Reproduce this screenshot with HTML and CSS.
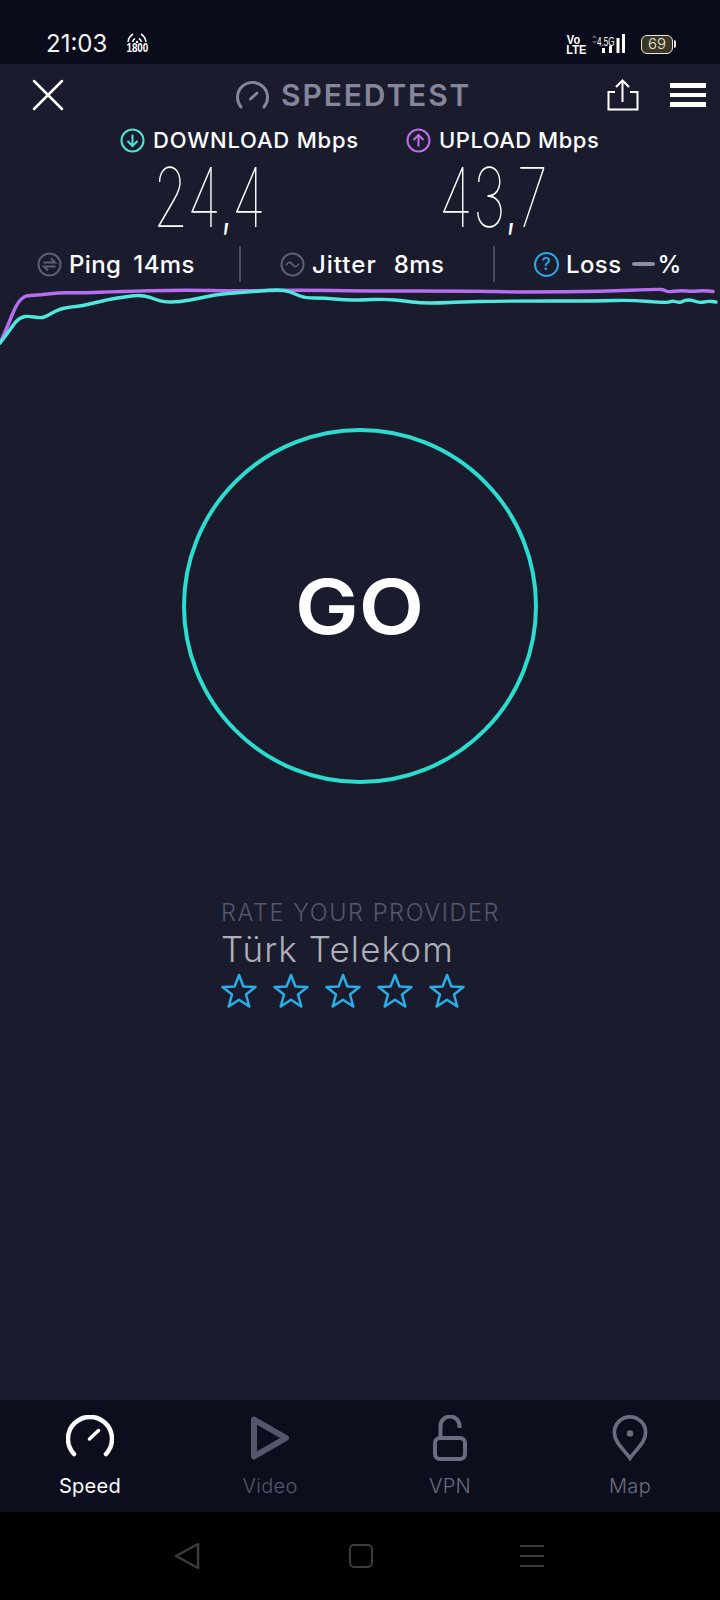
FILE: index.html
```html
<!DOCTYPE html>
<html lang="tr">
<head>
    <meta charset="UTF-8">
    <meta name="viewport" content="width=device-width, initial-scale=1.0">
    <title>Speedtest</title>
    <link rel="stylesheet" href="styles.css">
</head>
<body>
<div class="screen">
    <div class="status-bar">
        <span class="clock">21:03</span>
        <div class="hotspot">
            <svg width="22" height="11" viewBox="0 0 22 11" fill="none" stroke="#fff" stroke-width="1.5">
                <path d="M2 10 A11 11 0 0 1 7 2"/>
                <path d="M20 10 A11 11 0 0 0 15 2"/>
                <path d="M6.5 10 A6 6 0 0 1 9 6.5"/>
                <path d="M15.500 10 A6 6 0 0 0 13 6.500"/>
                <circle cx="11" cy="10" r="1.200" fill="#fff" stroke="none"/>
            </svg>
            <span class="hotspot-band">1800</span>
        </div>
        <div class="status-right">
            <div class="volte"><span>Vo</span><span>LTE</span></div>
            <div class="signal">
                <svg width="36" height="20" viewBox="0 0 36 20" fill="#fff">
                    <path d="M3 4 L5.500 1 L8 4 Z M3 7 L8 7 L5.500 10 Z" fill="#55566a"/>
                    <rect x="13" y="14" width="3" height="5"/>
                    <rect x="20" y="12" width="3" height="7"/>
                    <rect x="27.500" y="4" width="3" height="15"/>
                    <rect x="33" y="0" width="3" height="19"/>
                </svg>
                <span class="network">4.5G</span>
            </div>
            <div class="battery"><span>69</span></div>
        </div>
    </div>

    <div class="app-header">
        <svg class="close-icon" width="32" height="32" viewBox="0 0 32 32" stroke="#fff" stroke-width="2.500" stroke-linecap="round">
            <path d="M2 2 L30 30 M30 2 L2 30"/>
        </svg>
        <div class="brand">
            <svg width="33" height="28" viewBox="0 0 33 28" fill="none" stroke="#85869a" stroke-width="3" stroke-linecap="round">
                <path d="M5 26 A15 15 0 1 1 28 26"/>
                <path d="M14.500 18 L21 12"/>
            </svg>
            <span>SPEEDTEST</span>
        </div>
        <svg class="share-icon" width="32" height="32" viewBox="0 0 32 32" fill="none" stroke="#fff" stroke-width="2">
            <path d="M8 13 H1.500 V30.500 H30.500 V13 H23"/>
            <path d="M15.500 23 V2 M9 8 L15.500 1.500 L22 8"/>
        </svg>
        <div class="menu-icon"><i></i><i></i><i></i></div>
    </div>

    <div class="speeds">
        <div class="speed speed-down">
            <div class="speed-label">
                <svg width="25" height="25" viewBox="0 0 25 25" fill="none" stroke="#4fe3d8" stroke-width="2">
                    <circle cx="12.500" cy="12.500" r="11"/>
                    <path d="M12.500 6.500 V18 M7.500 13 L12.500 18 L17.500 13"/>
                </svg>
                <span>DOWNLOAD Mbps</span>
            </div>
            <div class="speed-value">24<span class="comma">,</span>4</div>
        </div>
        <div class="speed speed-up">
            <div class="speed-label">
                <svg width="25" height="25" viewBox="0 0 25 25" fill="none" stroke="#bb6fe8" stroke-width="2">
                    <circle cx="12.500" cy="12.500" r="11"/>
                    <path d="M12.500 18.500 V7 M7.500 12 L12.500 7 L17.500 12"/>
                </svg>
                <span>UPLOAD Mbps</span>
            </div>
            <div class="speed-value">43<span class="comma">,</span>7</div>
        </div>
    </div>

    <div class="stats">
        <div class="stat stat-ping">
            <svg width="25" height="25" viewBox="0 0 25 25" fill="none" stroke="#5d5e70" stroke-width="2">
                <circle cx="12.500" cy="12.500" r="11"/>
                <path d="M6.500 10.500 H18 L14 6.500 M18.500 14.500 H7 L11 18.500"/>
            </svg>
            <span class="stat-name">Ping</span>
            <span class="stat-num">14ms</span>
        </div>
        <div class="stat stat-jitter">
            <svg width="25" height="25" viewBox="0 0 25 25" fill="none" stroke="#5d5e70" stroke-width="2">
                <circle cx="12.500" cy="12.500" r="11"/>
                <path d="M6 13.500 C8 9.500 10.500 9.500 12.500 12.500 C14.500 15.500 17 15.500 19 11.500" stroke-width="1.600"/>
            </svg>
            <span class="stat-name">Jitter</span>
            <span class="stat-num">8ms</span>
        </div>
        <div class="stat stat-loss">
            <span class="help-icon">?</span>
            <span class="stat-name">Loss</span>
            <i class="loss-dash"></i>
            <span class="stat-percent">%</span>
        </div>
    </div>

    <svg class="trace" width="720" height="65" viewBox="0 284 720 65" fill="none" stroke-width="3.400" stroke-linejoin="round" stroke-linecap="round">
        <path id="trace-up" stroke="#b66ef0"/>
        <path id="trace-down" stroke="#4fe8de"/>
    </svg>

    <div class="go-wrap">
        <div class="go-button"><span>GO</span></div>
    </div>

    <div class="rate">
        <div class="rate-title">RATE YOUR PROVIDER</div>
        <div class="rate-provider">Türk Telekom</div>
        <div class="stars">
            <svg width="36" height="36" viewBox="0 0 36 36"><path d="M18 2 L22.400 13.500 L34.500 14 L25 21.500 L28.300 33.500 L18 26.700 L7.700 33.500 L11 21.500 L1.500 14 L13.600 13.500 Z"/></svg>
            <svg width="36" height="36" viewBox="0 0 36 36"><path d="M18 2 L22.400 13.500 L34.500 14 L25 21.500 L28.300 33.500 L18 26.700 L7.700 33.500 L11 21.500 L1.500 14 L13.600 13.500 Z"/></svg>
            <svg width="36" height="36" viewBox="0 0 36 36"><path d="M18 2 L22.400 13.500 L34.500 14 L25 21.500 L28.300 33.500 L18 26.700 L7.700 33.500 L11 21.500 L1.500 14 L13.600 13.500 Z"/></svg>
            <svg width="36" height="36" viewBox="0 0 36 36"><path d="M18 2 L22.400 13.500 L34.500 14 L25 21.500 L28.300 33.500 L18 26.700 L7.700 33.500 L11 21.500 L1.500 14 L13.600 13.500 Z"/></svg>
            <svg width="36" height="36" viewBox="0 0 36 36"><path d="M18 2 L22.400 13.500 L34.500 14 L25 21.500 L28.300 33.500 L18 26.700 L7.700 33.500 L11 21.500 L1.500 14 L13.600 13.500 Z"/></svg>
        </div>
    </div>

    <div class="tabs">
        <div class="tab tab-active">
            <svg width="48" height="46" viewBox="0 0 48 46" fill="none" stroke="#fff" stroke-width="4.500" stroke-linecap="round">
                <path d="M8 39 A22 22 0 1 1 40 39"/>
                <path d="M23.500 24 L32.500 15.500" stroke-width="3.500"/>
            </svg>
            <span>Speed</span>
        </div>
        <div class="tab">
            <svg width="42" height="46" viewBox="0 0 42 46" fill="none" stroke="#55566b" stroke-width="6" stroke-linejoin="round">
                <path d="M5 4.500 L37 23 L5 41.500 Z"/>
            </svg>
            <span class="tab-dim">Video</span>
        </div>
        <div class="tab">
            <svg width="36" height="46" viewBox="0 0 36 46" fill="none" stroke="#6b6c80" stroke-width="4">
                <rect x="3" y="23" width="30" height="21" rx="5"/>
                <path d="M8.500 23 V11 A9.500 9.500 0 0 1 27.500 11 V13"/>
            </svg>
            <span>VPN</span>
        </div>
        <div class="tab">
            <svg width="40" height="46" viewBox="0 0 40 50" fill="none" stroke="#6b6c80" stroke-width="4">
                <path d="M20 47 C14 38 3 30 3 19 A17 17 0 0 1 37 19 C37 30 26 38 20 47 Z"/>
                <circle cx="20" cy="20" r="3.500" fill="#6b6c80" stroke="none"/>
            </svg>
            <span>Map</span>
        </div>
    </div>

    <div class="nav-bar">
        <svg width="28" height="28" viewBox="0 0 28 28" fill="none" stroke="#3c3c3c" stroke-width="2.500" stroke-linejoin="round">
            <path d="M25 2 V26 L3 14 Z"/>
        </svg>
        <div class="nav-home"></div>
        <div class="nav-menu"><i></i><i></i><i></i></div>
    </div>
</div>
<script src="trace.js"></script>
</body>
</html>
```

FILE: styles.css
```css
* {
    box-sizing: border-box;
}
body {
    margin: 0;
    background: #1a1c2e;
    font-family: Inter, "Open Sans", sans-serif;
    color: white;
}
.screen {
    width: 720px;
    height: 1600px;
    display: flex;
    flex-direction: column;
    overflow: hidden;
}

/* status bar */
.status-bar {
    height: 64px;
    flex: none;
    background: #0b0c1b;
    display: flex;
    align-items: flex-start;
    padding: 30px 0 0 46px;
}
.clock {
    font-size: 24px;
    line-height: 28px;
    font-weight: 400;
    color: #f4f4f4;
}
.hotspot {
    margin: 2px 0 0 18px;
    width: 24px;
    display: flex;
    flex-direction: column;
    align-items: center;
}
.hotspot-band {
    font-family: "Liberation Sans", sans-serif;
    font-size: 12px;
    line-height: 11px;
    font-weight: 700;
    transform: scaleX(0.82);
}
.status-right {
    margin-left: auto;
    margin-right: 47px;
    display: flex;
    align-items: flex-start;
}
.volte {
    display: flex;
    flex-direction: column;
    font-family: "Liberation Sans", sans-serif;
    font-size: 13px;
    line-height: 10px;
    font-weight: 700;
    text-align: center;
    width: 17px;
    margin-top: 5px;
    transform: scaleX(0.85);
}
.signal {
    position: relative;
    width: 36px;
    height: 20px;
    margin: 4px 0 0 7px;
}
.network {
    position: absolute;
    left: 8px;
    top: 2px;
    font-family: "Liberation Sans", sans-serif;
    font-size: 13px;
    line-height: 12px;
    transform: scaleX(0.62);
    transform-origin: left;
}
.battery {
    position: relative;
    width: 32px;
    height: 19px;
    margin: 5px 0 0 16px;
    background: #3a3628;
    border: 1.500px solid #ece6d2;
    border-radius: 6px;
    font-size: 15px;
    line-height: 16px;
    font-weight: 300;
    color: #ece6d2;
    text-align: center;
}
.battery::after {
    content: "";
    position: absolute;
    right: -4px;
    top: 4px;
    width: 2px;
    height: 8px;
    background: #ece6d2;
    border-radius: 0 2px 2px 0;
}

/* header */
.app-header {
    height: 62px;
    flex: none;
    display: flex;
    align-items: center;
    padding: 0 14px 0 32px;
}
.brand {
    display: flex;
    align-items: center;
    gap: 12px;
    margin-left: 172px;
    font-size: 30px;
    font-weight: 600;
    letter-spacing: 1.900px;
    color: #85869a;
}
.share-icon {
    margin-left: auto;
    margin-right: 31px;
}
.menu-icon {
    width: 36px;
    display: flex;
    flex-direction: column;
    gap: 5px;
}
.menu-icon i {
    display: block;
    height: 4.500px;
    background: white;
}

/* download / upload */
.speeds {
    flex: none;
    display: flex;
    padding-left: 120px;
}
.speed-down {
    width: 286px;
}
.speed-down .speed-label {
    letter-spacing: 0.800px;
}
.speed-up .speed-label {
    letter-spacing: 0.500px;
}
.speed-label {
    display: flex;
    align-items: center;
    gap: 8px;
    height: 28px;
    font-size: 22px;
    font-weight: 500;
}
.speed-value {
    font-size: 82px;
    line-height: 80px;
    font-weight: 100;
    margin: 4px 0 0 33px;
    transform: scaleX(0.69);
    transform-origin: left;
    white-space: nowrap;
}
.comma {
    font-size: 42px;
    line-height: 0;
    font-weight: 400;
    margin: 0 2px;
}

/* ping, jitter, loss */
.stats {
    flex: none;
    height: 40px;
    display: flex;
    align-items: center;
    margin-top: 6px;
}
.stat {
    height: 36px;
    display: flex;
    align-items: center;
    font-size: 24px;
    font-weight: 500;
    letter-spacing: 0.400px;
    white-space: nowrap;
}
.stat-ping {
    width: 241px;
    padding-left: 37px;
    border-right: 2px solid #4a4b5c;
}
.stat-jitter {
    width: 254px;
    padding-left: 39px;
    border-right: 2px solid #4a4b5c;
}
.stat-loss {
    padding-left: 39px;
}
.stat-name {
    margin-left: 7px;
}
.stat-jitter .stat-name {
    letter-spacing: 1px;
}
.stat-ping .stat-num {
    margin-left: 12px;
}
.stat-jitter .stat-num {
    margin-left: 17px;
}
.help-icon {
    width: 25px;
    height: 25px;
    border: 2px solid #29a9e6;
    border-radius: 50%;
    color: #29a9e6;
    font-size: 17px;
    font-weight: 500;
    line-height: 21px;
    text-align: center;
}
.loss-dash {
    width: 23px;
    height: 4px;
    margin: 0 3px 0 10px;
    background: #8b8c9c;
    border-radius: 2px;
}

.trace {
    flex: none;
    display: block;
}

/* go button */
.go-wrap {
    flex: none;
    display: flex;
    justify-content: center;
    padding-top: 79px;
}
.go-button {
    width: 356px;
    height: 356px;
    border: 4px solid #2bdccf;
    border-radius: 50%;
    display: flex;
    align-items: center;
    justify-content: center;
    font-size: 76px;
    font-weight: 560;
}
.go-button span {
    transform: scaleX(1.12);
}

/* provider rating */
.rate {
    flex: none;
    padding: 115px 0 0 221px;
}
.rate-title {
    font-size: 23.500px;
    line-height: 28px;
    font-weight: 300;
    letter-spacing: 1.600px;
    color: #55576a;
}
.rate-provider {
    font-size: 35px;
    line-height: 44px;
    font-weight: 300;
    letter-spacing: 1.100px;
    color: #aeb0b8;
}
.stars {
    display: flex;
    gap: 16px;
    margin-top: 2px;
}
.stars path {
    fill: none;
    stroke: #29aee8;
    stroke-width: 2.500;
    stroke-linejoin: round;
}

/* bottom tabs */
.tabs {
    flex: none;
    height: 112px;
    margin-top: auto;
    background: #0c0e1d;
    display: grid;
    grid-template-columns: repeat(4, 180px);
}
.tab {
    display: flex;
    flex-direction: column;
    align-items: center;
    padding-top: 15px;
    gap: 12px;
    font-size: 20px;
    line-height: 26px;
    font-weight: 300;
    letter-spacing: 0.300px;
    color: #6b6c80;
}
.tab-dim {
    color: #55566b;
}
.tab-active {
    font-weight: 400;
    color: white;
}
.nav-bar {
    flex: none;
    height: 88px;
    background: black;
    display: flex;
    align-items: center;
    padding: 0 176px 0 173px;
    justify-content: space-between;
}
.nav-home {
    width: 24px;
    height: 24px;
    border: 2.500px solid #3c3c3c;
    border-radius: 5px;
}
.nav-menu {
    width: 24px;
    display: flex;
    flex-direction: column;
    gap: 7.500px;
}
.nav-menu i {
    display: block;
    height: 2.500px;
    background: #3c3c3c;
}
```

FILE: trace.js
```js
// speed samples as x,y in page pixels
var upload = [[0,343],[6,330],[12,315],[17,304],[22,298],[27,295.5],[40,295],[60,292.5],[80,293],[120,291.5],[180,290],[240,291],[300,290],[360,291],[480,291],[510,292],[530,292],[600,291.5],[660,289],[664,290],[668,292],[680,290.5],[693,291.5],[703,290.5],[713,291.5]];
var download = [[0,343],[10,330],[16,321],[22,317],[28,316],[40,318],[45,317],[52,313],[60,309],[70,307],[82,306],[110,299],[125,297],[138,295],[150,297],[162,302],[180,302],[200,298],[220,294],[250,292],[270,290],[285,290],[295,294],[305,298],[325,298],[345,300],[360,300],[385,299],[405,301],[420,303],[440,303],[460,302],[500,301],[600,301],[630,300],[668,303],[672,300.5],[680,303],[685,300],[692,300],[700,303],[708,301],[716,302]];

// round the corners by curving through the midpoints
function smooth(points) {
    var d = 'M' + points[0].join(' ');
    for (var i = 1; i < points.length - 1; i++) {
        var midX = (points[i][0] + points[i + 1][0]) / 2;
        var midY = (points[i][1] + points[i + 1][1]) / 2;
        d += ' Q' + points[i].join(' ') + ' ' + midX + ' ' + midY;
    }
    return d + ' L' + points[points.length - 1].join(' ');
}

document.getElementById('trace-up').setAttribute('d', smooth(upload));
document.getElementById('trace-down').setAttribute('d', smooth(download));
```
